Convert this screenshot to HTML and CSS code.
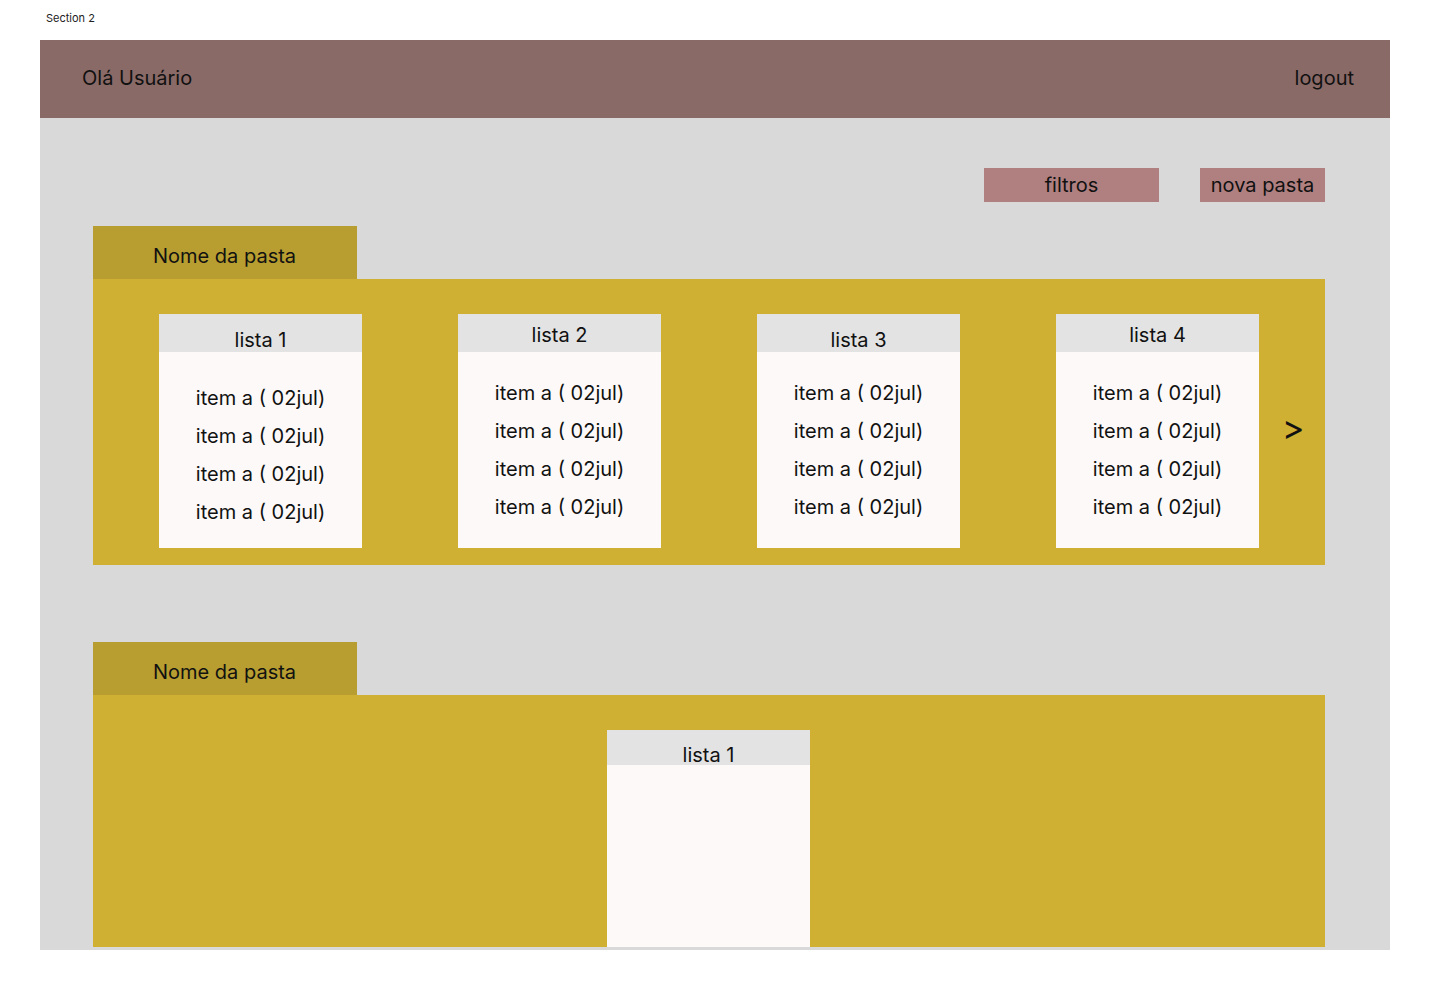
FILE: index.html
```html
<!DOCTYPE html>
<html lang="pt-BR">
<head>
    <meta charset="UTF-8">
    <meta name="viewport" content="width=device-width, initial-scale=1.0">
    <title>Section 2</title>
    <link rel="stylesheet" href="styles.css">
</head>
<body>

<div class="section-label">Section 2</div>

<div class="frame">
    <!-- Top bar -->
    <header class="topbar">
        <span>Olá Usuário</span>
        <span>logout</span>
    </header>

    <div class="toolbar">
        <button class="btn btn-filtros">filtros</button>
        <button class="btn btn-nova">nova pasta</button>
    </div>

    <!-- Pasta 1 -->
    <section class="folder">
        <div class="folder-tab">Nome da pasta</div>
        <div class="folder-body">
            <div class="card card-low">
                <div class="card-title">lista 1</div>
                <ul class="card-items">
                    <li>item a ( 02jul)</li>
                    <li>item a ( 02jul)</li>
                    <li>item a ( 02jul)</li>
                    <li>item a ( 02jul)</li>
                </ul>
            </div>
            <div class="card">
                <div class="card-title">lista 2</div>
                <ul class="card-items">
                    <li>item a ( 02jul)</li>
                    <li>item a ( 02jul)</li>
                    <li>item a ( 02jul)</li>
                    <li>item a ( 02jul)</li>
                </ul>
            </div>
            <div class="card card-title-low">
                <div class="card-title">lista 3</div>
                <ul class="card-items">
                    <li>item a ( 02jul)</li>
                    <li>item a ( 02jul)</li>
                    <li>item a ( 02jul)</li>
                    <li>item a ( 02jul)</li>
                </ul>
            </div>
            <div class="card">
                <div class="card-title">lista 4</div>
                <ul class="card-items">
                    <li>item a ( 02jul)</li>
                    <li>item a ( 02jul)</li>
                    <li>item a ( 02jul)</li>
                    <li>item a ( 02jul)</li>
                </ul>
            </div>
            <div class="next">&gt;</div>
        </div>
    </section>

    <!-- Pasta 2 -->
    <section class="folder folder-second">
        <div class="folder-tab">Nome da pasta</div>
        <div class="folder-body folder-body-short">
            <div class="card card-empty">
                <div class="card-title">lista 1</div>
                <ul class="card-items"></ul>
            </div>
        </div>
    </section>
</div>

</body>
</html>
```

FILE: styles.css
```css
body {
    margin: 0;
    background-color: #fff;
    font-family: Inter, "Noto Sans", sans-serif;
    color: #111;
}

.section-label {
    font-size: 11px;
    line-height: 14px;
    padding: 11px 0 0 46px;
    height: 29px;
    color: #222;
}

.frame {
    margin-left: 40px;
    width: 1350px;
    height: 910px;
    background-color: #d9d9d9;
    overflow: hidden;
}

/* Top bar */
.topbar {
    height: 78px;
    background-color: #8a6a67;
    display: flex;
    justify-content: space-between;
    align-items: center;
    padding: 0 36px 2px 42px;
    box-sizing: border-box;
    font-size: 20px;
}

.toolbar {
    display: flex;
    justify-content: flex-end;
    gap: 41px;
    margin-top: 50px;
    padding-right: 65px;
}

.btn {
    height: 34px;
    border: none;
    padding: 0;
    background-color: #b08080;
    font-family: Inter, "Noto Sans", sans-serif;
    font-size: 20px;
    color: #111;
}
.btn-filtros { width: 175px; }
.btn-nova { width: 125px; }

/* Pastas */
.folder {
    margin: 24px 0 0 53px;
    width: 1232px;
}
.folder-second {
    margin-top: 77px;
}

.folder-tab {
    width: 204px;
    height: 53px;
    padding-left: 60px;
    background-color: #b89e30;
    font-size: 20px;
    line-height: 60px;
}

.folder-body {
    height: 251px;
    background-color: #cfb032;
    display: flex;
    align-items: flex-start;
    gap: 96px;
    padding: 35px 0 0 66px;
}
.folder-body-short {
    height: 217px;
    padding-left: 514px;
}

/* Listas */
.card {
    width: 203px;
    background-color: #fcf9f8;
    font-size: 20px;
}

.card-title {
    height: 38px;
    box-sizing: border-box;
    padding-top: 9px;
    line-height: 24px;
    text-align: center;
    background-color: #e3e3e3;
}
.card-low .card-title,
.card-title-low .card-title {
    padding-top: 14px;
}

.card-items {
    list-style: none;
    margin: 0;
    padding: 22px 0 22px;
    height: 152px;
    text-align: center;
    line-height: 38px;
}
.card-low .card-items {
    padding-top: 27px;
    padding-bottom: 17px;
}

.card-empty .card-title {
    height: 35px;
    padding-top: 13px;
}
.card-empty .card-items {
    height: 182px;
    padding: 0;
}

.next {
    align-self: center;
    margin: -24px 0 0 -73px;
    font-size: 34px;
    line-height: 34px;
}
```
